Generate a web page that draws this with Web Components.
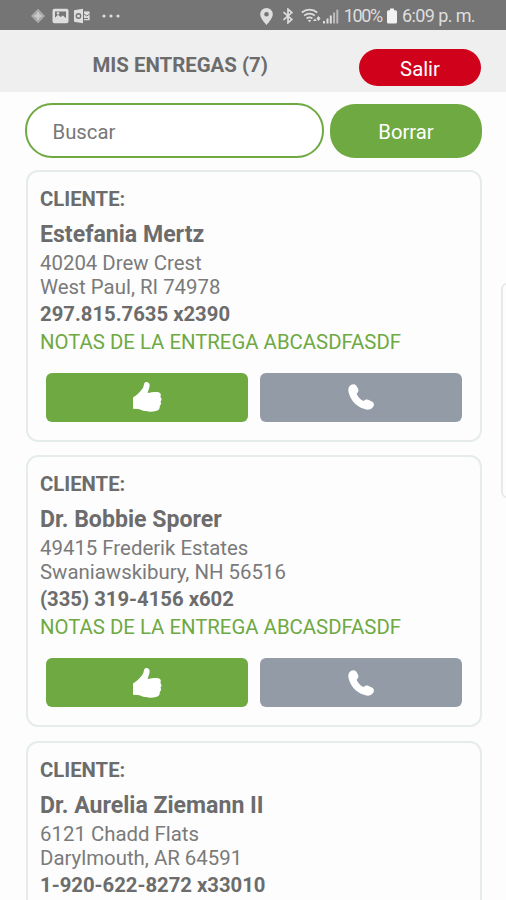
<!DOCTYPE html>
<html lang="es">
<head>
<meta charset="utf-8">
<meta name="viewport" content="width=device-width, initial-scale=1">
<title>Mis entregas</title>
<style>
  body {
    margin: 0;
    height: 900px;
    overflow: hidden;
    background: #fdfdfd;
    color: #6c6c6c;
    font-family: Roboto, sans-serif;
    font-size: 20.3px;
  }
</style>
</head>
<body>
<delivery-app></delivery-app>

<script>
class StatusBar extends HTMLElement {
  connectedCallback() {
    this.attachShadow({ mode: 'open' });
    this.shadowRoot.innerHTML = `
      <style>
        :host {
          display: flex;
          justify-content: space-between;
          align-items: center;
          box-sizing: border-box;
          height: 30px;
          padding: 2px 31px 0 30px;
          background: #757575;
          color: #dedede;
          font-size: 18px;
        }
        div { display: flex; align-items: center; }
        svg { display: block; fill: currentColor; }
        .dots { margin-left: 12px; }
        .battery { margin: 0 5px 0 5px; }
        span { white-space: nowrap; line-height: 28px; }
        .level { letter-spacing: -1.3px; }
        .time { letter-spacing: -0.6px; }
      </style>
      <div>
        <svg width="16" height="16" viewBox="0 0 16 16"><path d="M8 .8 15 8l-7 7.2L1 8z" fill="#aaa"/><path d="M8 4v8M4 8h8" stroke="#ccc" stroke-width="1.6"/><circle cx="8" cy="8" r="2.4" fill="#c8c8c8"/></svg>
        <svg width="17" height="16" viewBox="0 0 17 16" style="margin-left:6px"><rect x=".5" y=".8" width="16" height="14.4" rx="2"/><path d="M3 3.4h11v6.8l-3-2.8-2.3 1.7L6 6.8l-3 3z" fill="#757575"/><circle cx="6" cy="5.3" r="1.2"/></svg>
        <svg width="16" height="16" viewBox="0 0 16 16" style="margin-left:5px"><path d="M0 2.2 9 .8v14.4L0 13.8z"/><path d="M10 3.4h5.6v8.8H10z"/><circle cx="4.5" cy="8" r="2.2" fill="none" stroke="#757575" stroke-width="1.4"/><path d="m10 6 2.8 2L15.6 6M10 10.5h4" fill="none" stroke="#757575"/></svg>
        <svg class="dots" width="18" height="4" viewBox="0 0 18 4"><circle cx="2" cy="2" r="1.6"/><circle cx="9" cy="2" r="1.6"/><circle cx="16" cy="2" r="1.6"/></svg>
      </div>
      <div>
        <svg width="13" height="17" viewBox="0 0 13 17"><path fill-rule="evenodd" d="M6.5 0A6.3 6.3 0 0 0 .2 6.3C.2 10.5 6.5 17 6.5 17s6.3-6.5 6.3-10.7A6.3 6.3 0 0 0 6.5 0m0 4a2.3 2.3 0 1 1 0 4.6 2.3 2.3 0 0 1 0-4.6"/></svg>
        <svg width="12" height="16" viewBox="0 0 12 16" style="margin-left:9px"><path d="m1.5 4.2 8.3 7.2L6 14.8V1.2l3.8 3.4-8.3 7.2" fill="none" stroke="currentColor" stroke-width="1.7"/></svg>
        <svg width="20" height="16" viewBox="0 0 20 16" style="margin-left:7px"><g fill="none" stroke="currentColor" stroke-width="1.7"><path d="M.8 4.5a12 12 0 0 1 15.4 0M3.2 7.6a8.3 8.3 0 0 1 10.6 0M5.6 10.5a4.6 4.6 0 0 1 5.8 0"/></g><path d="M6.8 12 8.5 14.5 10.2 12z"/><path d="m12 13 2-2.5 1.8 2.5zM15.5 10.5l2-2.5 2 2.5-2 2.5z"/></svg>
        <svg width="16" height="15" viewBox="0 0 16 15" style="margin-left:2px"><path d="M0 12h2v2.5H0zM3.5 9.5h2v5h-2zM6.8 6.5h2v8h-2z"/><path d="M10.1 3.5h2v11h-2zM13.3.8h2v13.7h-2z" opacity=".65"/></svg>
        <span class="level" style="margin-left:5px">100%</span>
        <svg class="battery" width="10" height="16" viewBox="0 0 10 16"><path d="M3 .5h4v1.7h1.5q1.5 0 1.5 1.5v10.3q0 1.5-1.5 1.5h-7Q0 15.5 0 14V3.7q0-1.5 1.5-1.5H3z" fill="#f2f2f2"/></svg>
        <span class="time">6:09 p. m.</span>
      </div>
    `;
  }
}

class PillButton extends HTMLElement {
  connectedCallback() {
    this.attachShadow({ mode: 'open' });
    this.shadowRoot.innerHTML = `
      <style>
        :host { display: block; }
        button {
          display: block;
          width: 100%;
          height: 100%;
          padding: 2px 0 0;
          border: 0;
          border-radius: var(--pill-radius, 20px);
          background: var(--pill-color, #6ea942);
          color: #fff;
          font: inherit;
          cursor: pointer;
        }
      </style>
      <button><slot></slot></button>
    `;
  }
}

class PageHeader extends HTMLElement {
  connectedCallback() {
    this.attachShadow({ mode: 'open' });
    this.shadowRoot.innerHTML = `
      <style>
        :host {
          display: flex;
          justify-content: space-between;
          align-items: flex-start;
          box-sizing: border-box;
          height: 62px;
          padding: 19px 25px 0 92.5px;
          background: #efefef;
        }
        h1 {
          margin: 4px 0 0;
          font-size: 20.4px;
          font-weight: 700;
          line-height: 24px;
        }
        pill-button {
          width: 122px;
          height: 37px;
          --pill-color: #d0021b;
          --pill-radius: 19px;
        }
      </style>
      <h1><slot></slot></h1>
      <pill-button>Salir</pill-button>
    `;
  }
}

class SearchRow extends HTMLElement {
  connectedCallback() {
    this.attachShadow({ mode: 'open' });
    this.shadowRoot.innerHTML = `
      <style>
        :host {
          display: flex;
          gap: 6px;
          height: 55px;
          padding: 11px 24px 0 25px;
        }
        .field {
          display: flex;
          align-items: center;
          box-sizing: border-box;
          width: 299px;
          padding: 2px 26px 0 25.5px;
          border: 2px solid #6ea942;
          border-radius: 27px;
          background: #fff;
          color: #777;
        }
        pill-button {
          flex: 1;
          margin-top: 1px;
          height: 54px;
          --pill-radius: 25px;
        }
      </style>
      <div class="field">Buscar</div>
      <pill-button>Borrar</pill-button>
    `;
  }
}

class DeliveryCard extends HTMLElement {
  connectedCallback() {
    this.attachShadow({ mode: 'open' });
    this.shadowRoot.innerHTML = `
      <style>
        :host {
          display: block;
          box-sizing: border-box;
          height: 272px;
          padding: 15px 13px 0 12.5px;
          border: 2px solid #e6ecec;
          border-radius: 12px;
          background: #fdfdfd;
        }
        p { margin: 0; line-height: 24px; white-space: nowrap; }
        .label, .phone { font-weight: 700; }
        .name { margin: 10px 0 2px; font-size: 23.1px; font-weight: 700; line-height: 28px; }
        .address { color: #7a7a7a; font-size: 20.4px; }
        .phone { margin: 3px 0 4px; }
        .notes { color: #6ea942; font-size: 20.35px; }
        .actions {
          display: flex;
          gap: 12px;
          margin: 19px 5.5px 0 6px;
        }
        button {
          display: flex;
          flex: 1;
          align-items: center;
          justify-content: center;
          height: 49px;
          padding: 0;
          border: 0;
          border-radius: 6px;
          cursor: pointer;
        }
        .ok { background: #6ea942; }
        .call { background: #929ba6; }
        svg { display: block; fill: #fff; }
      </style>
      <p class="label">CLIENTE:</p>
      <p class="name"><slot name="name"></slot></p>
      <p class="address"><slot name="street"></slot></p>
      <p class="address"><slot name="city"></slot></p>
      <p class="phone"><slot name="phone"></slot></p>
      <p class="notes"><slot name="notes">&nbsp;</slot></p>
      <div class="actions">
        <button class="ok" aria-label="Entregado">
          <svg width="30" height="32" viewBox="0 0 30 32"><path d="M1 16.5C5 14 9 10 11.2 6.5 12 4 12 1 14.2 1c3 0 4 2.4 3.2 5.2L15.6 12c3-.6 8.5-1.4 11-.8 2.2.6 2.8 2.8 1.7 4.5 1.5 1.5 1.6 3.3.2 4.8 1 1.7.6 3.4-.8 4.5.4 2.2-.6 4-2.9 4.8-4.6 1.5-10 1.2-14.3-.2-1.7-.6-3-1.4-4.5-1.5L1 27.8z"/></svg>
        </button>
        <button class="call" aria-label="Llamar">
          <svg width="28" height="28" viewBox="0 0 28 28"><path d="M2.3 3.5C4.5.8 7.8.4 9.6 3l1.5 3c.8 1.8.2 3.1-1.5 4.7 1.3 3.3 3.6 5.8 6.9 7.3 1.6-1.6 3-2 4.7-1.2l4.1 2c2.300 1.4 2.1 4.3-.2 6.3-2.2 2-5.500 2-9 .5C8.8 22.7 4.2 17.5 2 10.7 1 7.8 1 5.2 2.3 3.5"/></svg>
        </button>
      </div>
    `;
  }
}

class DeliveryApp extends HTMLElement {
  connectedCallback() {
    const notes = 'NOTAS DE LA ENTREGA ABCASDFASDF';
    const deliveries = [
      ['Estefania Mertz', '40204 Drew Crest', 'West Paul, RI 74978', '297.815.7635 x2390', notes],
      ['Dr. Bobbie Sporer', '49415 Frederik Estates', 'Swaniawskibury, NH 56516', '(335) 319-4156 x602', notes],
      ['Dr. Aurelia Ziemann II', '6121 Chadd Flats', 'Darylmouth, AR 64591', '1-920-622-8272 x33010']
    ];

    this.attachShadow({ mode: 'open' });
    this.shadowRoot.innerHTML = `
      <style>
        :host {
          display: block;
          position: relative;
          height: 900px;
          overflow: hidden;
        }
        .list {
          display: flex;
          flex-direction: column;
          gap: 13.5px;
          padding: 11.5px 24px 0 25.5px;
        }
        /* edge of the drawer that slides in from the right */
        .drawer {
          position: absolute;
          left: 501px;
          top: 283px;
          width: 40px;
          height: 215px;
          box-sizing: border-box;
          border: 2px solid #e8eaea;
          border-radius: 6px;
        }
      </style>
      <status-bar></status-bar>
      <page-header>MIS ENTREGAS (7)</page-header>
      <search-row></search-row>
      <div class="list">
        ${deliveries.map(([name, street, city, phone, note]) => `
          <delivery-card>
            <span slot="name">${name}</span>
            <span slot="street">${street}</span>
            <span slot="city">${city}</span>
            <span slot="phone">${phone}</span>
            ${note ? `<span slot="notes">${note}</span>` : ''}
          </delivery-card>
        `).join('')}
      </div>
      <div class="drawer"></div>
    `;
  }
}

customElements.define('status-bar', StatusBar);
customElements.define('pill-button', PillButton);
customElements.define('page-header', PageHeader);
customElements.define('search-row', SearchRow);
customElements.define('delivery-card', DeliveryCard);
customElements.define('delivery-app', DeliveryApp);
</script>
</body>
</html>
